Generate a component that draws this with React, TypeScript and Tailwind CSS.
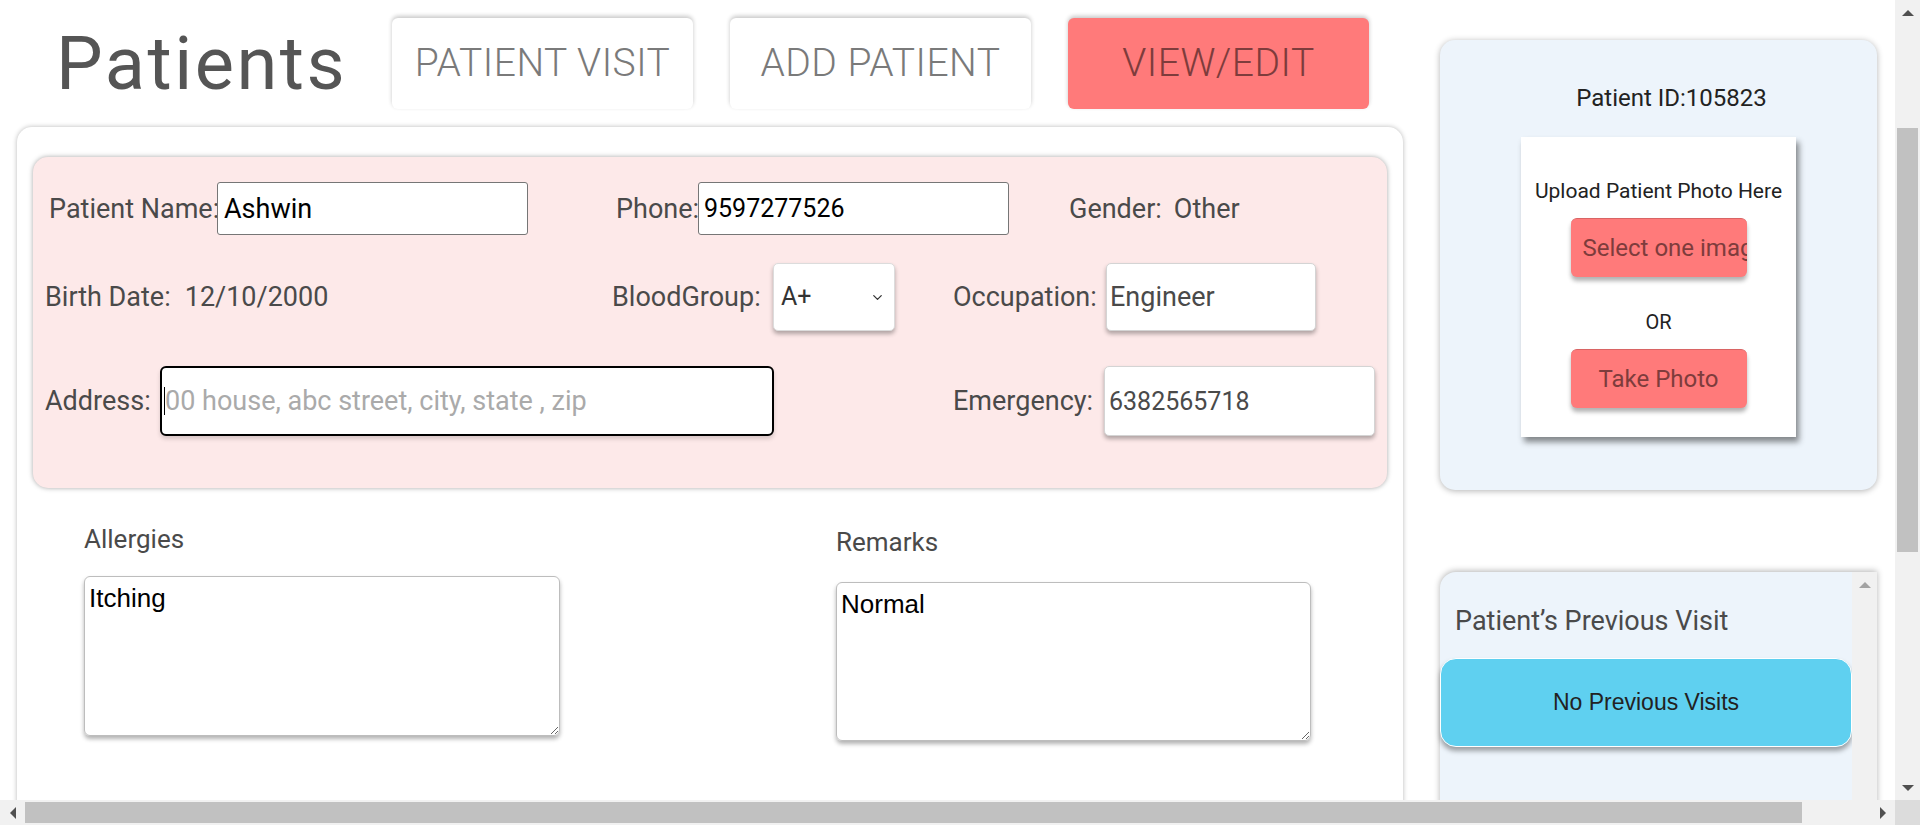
import { ChevronDown } from 'lucide-react';

const Arrow = ({ dir, color = '#505050' }: { dir: 'up' | 'down' | 'left' | 'right'; color?: string }) => {
  const pts = {
    up: '0,7 6,1 12,7',
    down: '0,1 6,7 12,1',
    left: '7,0 1,6 7,12',
    right: '1,0 7,6 1,12',
  }[dir];
  const vertical = dir === 'up' || dir === 'down';
  return (
    <svg width={vertical ? 12 : 8} height={vertical ? 8 : 12} viewBox={vertical ? '0 0 12 8' : '0 0 8 12'}>
      <polygon points={pts} fill={color} />
    </svg>
  );
};

const label = 'text-[27px] leading-[32px] text-[#4a4a4a] whitespace-nowrap';

const Tab = ({ text, active = false }: { text: string; active?: boolean }) => (
  <button
    className={`w-[301px] h-[91px] rounded-[6px] flex items-center justify-center text-[39px] font-light tracking-[0.5px] shadow-[0_-2px_4px_rgba(0,0,0,0.22)] ${
      active ? 'bg-[#ff7a7a] text-[#7e3c3c]' : 'bg-white text-[#7a7a7a]'
    }`}
  >
    {text}
  </button>
);

const PatientForm = () => (
  <div className="bg-[#fde9e9] rounded-[15px] shadow-[0_0_5px_rgba(0,0,0,0.35)] h-[331px] pt-[25px]">
    {/* row 1 */}
    <div className="flex items-center pl-[16px]">
      <span className={`${label} w-[168px]`}>Patient Name:</span>
      <input
        defaultValue="Ashwin"
        className="w-[311px] h-[53px] bg-white border border-[#767676] rounded-[3px] pl-[6px] text-[27px] text-black outline-none"
      />
      <span className={`${label} w-[82px] ml-[88px]`}>Phone:</span>
      <input
        defaultValue="9597277526"
        className="w-[311px] h-[53px] bg-white border border-[#767676] rounded-[3px] pl-[5px] text-[25px] text-black outline-none"
      />
      <span className={`${label} ml-[60px]`}>Gender:</span>
      <span className={`${label} ml-[12px]`}>Other</span>
    </div>

    {/* row 2 */}
    <div className="flex items-center pl-[12px] mt-[28px]">
      <div className="w-[567px] flex items-center">
        <span className={label}>Birth Date:</span>
        <span className={`${label} ml-[14px]`}>12/10/2000</span>
      </div>
      <span className={`${label} w-[161px]`}>BloodGroup:</span>
      <div className="w-[122px] h-[68px] bg-white border border-[#dcdcdc] rounded-[5px] shadow-[0_3px_4px_rgba(0,0,0,0.3)] flex items-center justify-between pl-[7px] pr-[9px]">
        <span className="text-[25px] text-[#333]">A+</span>
        <ChevronDown size={15} strokeWidth={2} className="text-[#333]" />
      </div>
      <span className={`${label} w-[153px] ml-[58px]`}>Occupation:</span>
      <input
        defaultValue="Engineer"
        className="w-[210px] h-[68px] bg-white border border-[#d4d4d4] rounded-[5px] shadow-[0_3px_4px_rgba(0,0,0,0.3)] pl-[3px] text-[27px] text-[#4a4a4a] outline-none"
      />
    </div>

    {/* row 3 */}
    <div className="flex items-center pl-[12px] mt-[35px]">
      <span className={`${label} w-[115px]`}>Address:</span>
      <div className="w-[614px] h-[70px] bg-white border-2 border-black rounded-[6px] shadow-[0_3px_4px_rgba(0,0,0,0.15)] flex items-center pl-[2px]">
        <span className="w-px h-[28px] bg-black" />
        <input
          placeholder="00 house, abc street, city, state , zip"
          className="flex-1 h-full bg-transparent text-[27px] outline-none placeholder:text-[#aaaaaa]"
        />
      </div>
      <span className={`${label} w-[151px] ml-[179px]`}>Emergency:</span>
      <input
        defaultValue="6382565718"
        className="w-[271px] h-[70px] bg-white border border-[#d4d4d4] rounded-[5px] shadow-[0_3px_4px_rgba(0,0,0,0.3)] pl-[4px] text-[25px] text-[#4a4a4a] outline-none"
      />
    </div>
  </div>
);

const Notes = () => (
  <div className="flex pl-[51px] mt-[36px]">
    <div className="w-[476px]">
      <div className="text-[26px] leading-[30px] text-[#4a4a4a]">Allergies</div>
      <textarea
        defaultValue="Itching"
        className="mt-[22px] w-[476px] h-[160px] border border-[#bdbdbd] rounded-[6px] shadow-[0_3px_4px_rgba(0,0,0,0.3)] px-[4px] pt-[6px] text-[26px] leading-[30px] text-black font-['Liberation_Sans',Arial,sans-serif] outline-none resize"
      />
    </div>
    <div className="w-[476px] ml-[276px] mt-[3px]">
      <div className="text-[26px] leading-[30px] text-[#4a4a4a]">Remarks</div>
      <textarea
        defaultValue="Normal"
        className="mt-[25px] w-[475px] h-[159px] border border-[#bdbdbd] rounded-[6px] shadow-[0_3px_4px_rgba(0,0,0,0.3)] px-[4px] pt-[6px] text-[26px] leading-[30px] text-black font-['Liberation_Sans',Arial,sans-serif] outline-none resize"
      />
    </div>
  </div>
);

const PhotoCard = () => (
  <div className="h-[450px] bg-[#edf4fb] rounded-[15px] shadow-[0_1px_6px_rgba(0,0,0,0.3)] pt-[44px] flex flex-col items-center">
    <div className="text-[24px] leading-[28px] text-[#222] pl-[26px]">Patient ID:105823</div>
    <div className="mt-[25px] w-[275px] h-[300px] bg-white shadow-[3px_5px_6px_rgba(0,0,0,0.45)] flex flex-col items-center pt-[42px]">
      <div className="text-[21px] leading-[24px] text-[#222]">Upload Patient Photo Here</div>
      <button className="mt-[15px] w-[176px] h-[59px] rounded-[6px] bg-[#ff7a7a] border-t border-[#d96464] shadow-[0_4px_4px_rgba(0,0,0,0.3)] text-[24px] text-[#7e3c3c] whitespace-nowrap overflow-hidden text-left pl-[12px]">
        Select one image
      </button>
      <div className="mt-[35px] text-[20px] leading-[20px] text-[#222]">OR</div>
      <button className="mt-[17px] w-[176px] h-[59px] rounded-[6px] bg-[#ff7a7a] border-t border-[#d96464] shadow-[0_4px_4px_rgba(0,0,0,0.3)] text-[24px] text-[#7e3c3c]">
        Take Photo
      </button>
    </div>
  </div>
);

const VisitsCard = () => (
  <div className="mt-[82px] h-[320px] flex bg-[#edf4fb] rounded-tl-[16px] shadow-[0_-1px_6px_rgba(0,0,0,0.3)]">
    <div className="flex-1 pt-[33px]">
      <div className="pl-[15px] text-[27px] leading-[32px] text-[#4a4a4a]">Patient’s Previous Visit</div>
      <div className="mt-[21px] h-[89px] rounded-[16px] bg-[#5fd0f0] border border-white shadow-[0_4px_5px_rgba(0,0,0,0.35)] flex items-center justify-center text-[23px] text-[#222] font-['Liberation_Sans',Arial,sans-serif]">
        No Previous Visits
      </div>
    </div>
    <div className="w-[25px] bg-[#f1f1f1] flex flex-col items-center">
      <div className="h-[25px] flex items-center justify-center">
        <Arrow dir="up" color="#a3a3a3" />
      </div>
    </div>
  </div>
);

export default function App() {
  return (
    <div className="w-[1920px] h-[825px] flex flex-col overflow-hidden bg-white font-['Roboto',sans-serif]">
      <div className="flex h-[800px]">
        <div className="flex-1 overflow-hidden flex items-start pl-[17px]">
          {/* left column */}
          <div className="w-[1386px]">
            <div className="flex items-center pt-[18px] pl-[39px]">
              <h1 className="w-[336px] text-[74px] leading-[91px] tracking-[2.5px] text-[#555]">Patients</h1>
              <div className="flex gap-[37px]">
                <Tab text="PATIENT VISIT" />
                <Tab text="ADD PATIENT" />
                <Tab text="VIEW/EDIT" active />
              </div>
            </div>
            <div className="mt-[18px] h-[760px] bg-white rounded-[15px] shadow-[0_0_5px_rgba(0,0,0,0.28)] px-[16px] pt-[30px]">
              <PatientForm />
              <Notes />
            </div>
          </div>

          {/* right column */}
          <div className="w-[437px] ml-[37px] pt-[40px]">
            <PhotoCard />
            <VisitsCard />
          </div>
        </div>

        {/* page scrollbar */}
        <div className="w-[25px] h-full bg-[#f1f1f1] flex flex-col">
          <div className="h-[25px] flex items-center justify-center">
            <Arrow dir="up" />
          </div>
          <div className="flex-1 px-[2px]">
            <div className="mt-[103px] h-[424px] bg-[#c1c1c1]" />
          </div>
          <div className="h-[25px] flex items-center justify-center">
            <Arrow dir="down" />
          </div>
        </div>
      </div>

      <div className="h-[25px] flex bg-[#f1f1f1]">
        <div className="w-[25px] flex items-center justify-center">
          <Arrow dir="left" />
        </div>
        <div className="flex-1 py-[2px]">
          <div className="w-[1777px] h-full bg-[#c1c1c1]" />
        </div>
        <div className="w-[25px] flex items-center justify-center">
          <Arrow dir="right" />
        </div>
        <div className="w-[25px] bg-[#dcdcdc]" />
      </div>
    </div>
  );
}
